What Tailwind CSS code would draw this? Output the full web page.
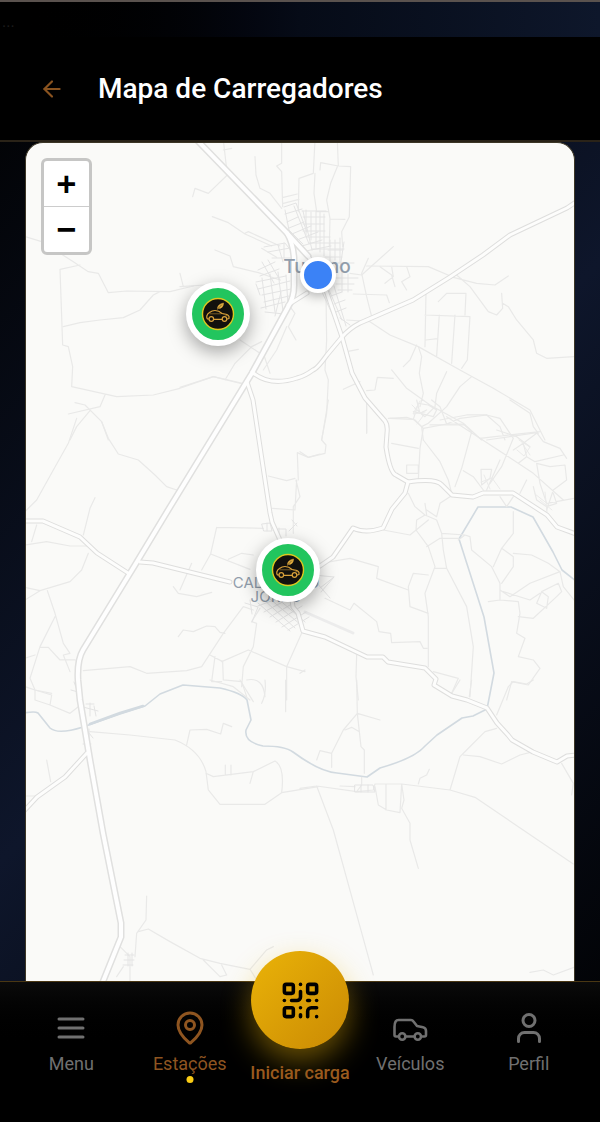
<!DOCTYPE html>
<html lang="pt-BR">
<head>
    <meta charset="UTF-8">
    <meta name="viewport" content="width=device-width, initial-scale=1.0">
    <title>Mapa de Carregadores</title>
    <script src="https://cdn.jsdelivr.net/npm/@tailwindcss/browser@4"></script>
</head>
<body class="min-h-screen flex flex-col bg-[linear-gradient(135deg,#000_0%,#0e162b_50%,#000_100%)] border-t-2 border-[#5a524e] font-[Roboto,sans-serif] text-white">
    <div class="h-[35px] shrink-0 px-[2px] pt-3 bg-linear-to-r from-black via-[#060b17] to-[#0e172b] text-base leading-4 text-[#1c1c1c]">...</div>

    <!-- Header -->
    <header class="h-[105px] shrink-0 flex items-center gap-[33px] px-[39px] bg-black border-b-2 border-[#2a2318]">
        <a href="#" aria-label="Voltar" class="text-[#8a531f]">
            <svg class="size-[26px]" viewBox="0 0 24 24" fill="none" stroke="currentColor" stroke-width="2" stroke-linecap="round" stroke-linejoin="round">
                <path d="m12 19-7-7 7-7" /><path d="M19 12H5" />
            </svg>
        </a>
        <h1 class="text-[28px] leading-8 font-medium">Mapa de Carregadores</h1>
    </header>

    <!-- Mapa -->
    <main class="flex-1 flex px-[25px]">
        <section aria-label="Mapa" class="relative flex-1 overflow-hidden rounded-t-[18px] border border-b-0 border-[#3c3626] bg-[#fafaf8]">
            <svg class="absolute inset-0 size-full" viewBox="26 143 548 838" preserveAspectRatio="xMidYMid slice" fill="none" stroke-linejoin="round" stroke-linecap="round">
                <defs>
                    <g id="highways">
                        <path d="M197 140L287 233L308 256" />
                        <path d="M287 233Q293 243 294 258V285Q294 298 288 307L252 373L170 507L135 565L83 650Q77 660 78 680L80 700L90 760L103 833L121 923V937L102 984" />
                    </g>
                    <g id="roads">
                        <path d="M308 256L317 270L327 293L342 337L352 373L365 398L385 421Q388 425 387 433L386 447Q390 473 396 475L408 482" />
                        <path d="M307 293L288 305" />
                        <path d="M576 202L567 208L510 235L483 255L450 277L413 300L360 323Q350 328 342 337L327 355Q317 369 313 370Q305 376 297 378Q270 387 252 372" />
                        <path d="M247 382L253 400L259 440L270 513L272 522L280 540L288 570L293 607L298 613L303 631L325 637L367 657H383L388 662L425 668L436 679L434 685L452 696L467 700L487 708L497 723L508 735L512 740L533 752L557 762L567 756L576 755" />
                        <path d="M24 521H43L80 537L97 553L128 573" />
                        <path d="M140 562L153 563L230 582" />
                        <path d="M320 566L333 557L353 528Q365 534 383 528L392 509L405 493L408 482Q436 478 442 485L452 495L473 497L483 493H513L547 515L557 527L576 534" />
                        <path d="M87 753L65 777L37 797L24 811" />
                    </g>
                </defs>

                <!-- Pista de pouso -->
                <path d="M305 612L353 633" stroke="#ececec" stroke-width="3" />

                <!-- Rios -->
                <g stroke="#d2dae0" stroke-width="1.6">
                    <path d="M24 713Q35 711 38 713L50 728Q58 735 83 727L120 714L145 706L160 694L183 685L220 688Q242 693 247 700L251 720L246 730Q244 742 263 746Q285 746 293 752Q320 772 337 773L367 777L380 768Q415 758 425 746L437 735L462 718L473 716L487 709L494 673L484 617L459 539L478 507H511L533 517L553 552L562 570L576 581" />
                    <path d="M90 724L120 713L143 706" stroke-width="2.5" />
                </g>

                <!-- Ruas e estradas de terra -->
                <g stroke="#e9e9e8" stroke-width="3.6">
                    <g transform="translate(180 140) scale(.3333)">
                        <path d="M130 0L142 105L85 160L45 145L38 170M130 30L155 25M225 50L228 105L240 145L270 160L305 205M305 0V70L290 78L305 95L308 200M355 215L357 115L400 100L405 0M405 100L402 160L410 215M420 90L422 68L475 78L472 0M475 78L512 80L508 230L485 275L488 320M472 80L452 130L440 180L450 235L448 320M450 237L495 238M410 215H445M310 172L352 162M357 178L310 190" />
                        <path d="M97 230L145 248L195 282L275 318M195 280L205 275L300 318M105 330L150 348L160 380L235 398M0 440L75 435M235 398L300 420M245 325L290 352M560 378L745 380L820 412L890 430L945 435L985 408M565 355L545 400L560 470L575 530M600 380L635 405L645 440M635 380L640 410L615 430M680 380L690 410L665 425L680 450M520 462L620 465L628 488M830 405L870 440L925 515L950 525L968 505L965 460M968 490L985 500L1010 540L1060 600L1070 640L1100 655L1185 650M738 460L735 620M735 525L870 530L862 660L845 685M825 525L815 670M778 525L770 648M775 485L800 460H858L855 525M738 600L772 596" />
                        <path d="M500 540L570 545L630 585L715 620L840 690L940 745L1050 810L1095 900M710 615L690 660L670 680M635 690L680 745L750 795L850 850L905 900M715 620L725 650L718 700L730 760L720 800M800 695L770 760L765 800M875 710L840 740L800 800L745 850L725 860M560 752L585 750L592 712L640 715M490 748L540 725M438 460L440 600L435 690L445 720L440 820L425 900M500 635L535 628M560 780V880M630 835L700 838L725 860L730 900M700 838L715 790L745 795L770 810L760 830L700 815M780 840L860 825L920 825L960 860L975 900M750 855H850M900 895L1080 875" />
                        <path d="M135 720L165 670L215 620L245 605M250 640L270 700M330 500L345 520L325 560L348 600M300 560L265 620M320 560L290 630L250 690M0 742L100 710L200 735M180 600L240 640M640 320L545 405L510 400" />
                    </g>
                    <g transform="translate(20 140) scale(.3333)">
                        <path d="M0 285L65 305L160 365L205 395L235 400L265 458L320 453L450 455L520 438M480 400L490 440M120 388L180 375M120 388L128 615L145 620L158 680L155 740L290 770L400 765L480 745L580 710L690 735M130 560L180 548L240 540L310 533L360 510L400 465L420 455M255 765L240 800L145 822M165 788L195 795L245 845L265 900M210 812L170 860L150 900" />
                    </g>
                    <g transform="translate(20 400) scale(.3333)">
                        <path d="M245 65L265 115L295 162L355 180L405 225L440 260L470 270M170 55L145 130L100 210L50 300L15 335M225 293L210 325L190 405M50 375L35 425M15 435L80 425L150 438H200M205 460L185 510L150 545L60 572L15 600M15 562L60 572M82 572L105 640L130 730L150 760L130 765L150 815M105 650L60 740L30 835L45 870L95 880M60 742H85L120 780H165M15 775L45 765" />
                        <path d="M190 812L330 800L380 820L500 812L545 800L610 700L670 620M475 710L490 690L520 695L560 678L585 680L600 697L615 700M460 560L475 580L530 590L575 577M515 490L480 570M590 382L572 462L545 510M590 382L730 385M572 462L690 508M625 478L665 460L700 465M745 228L800 242L825 235M830 240L825 330L758 325M828 240L840 290L820 320V400M835 240L832 158L865 172L900 162M670 620L700 630M720 625L695 665L710 670L700 740L670 800L665 860M605 785L685 750L800 800L855 815M800 900V800L845 700M570 765L608 785L610 840L665 845L680 890M585 770L575 845H605M680 840Q730 830 735 890" />
                    </g>
                    <g transform="translate(300 400) scale(.3333)">
                        <path d="M85 0L65 120L78 135L75 160L25 172L0 155M200 20V98M265 55L320 52L345 60L370 85L360 145L355 240M275 130L355 145M370 85L440 72H490L515 95L485 205L465 260M370 120L420 185L445 240L455 280M440 50L510 95L640 180L700 220L790 300M440 72L420 20L395 0M440 72L480 55L560 45L600 55L640 115M350 0L360 40L380 30M490 212L520 230L550 270M345 25L375 50L400 25M560 120L710 98L730 125L780 145L800 175M640 115L605 200L570 250M320 195H355V220H320ZM543 208H575L570 235L545 255ZM655 190L680 170L670 130L710 100M670 130L640 150M680 170L705 185L790 165M710 190L720 250L740 310L822 295M710 190L750 200L795 195L800 240L760 270L740 330M680 240L660 280M700 260L710 300L740 320L770 310L760 280M630 0L690 40L700 80L715 100" />
                        <path d="M325 280L345 320L375 345L410 360L425 400L430 450L440 505L500 620L520 740L510 890M375 345L350 360L348 390L385 440L405 500L375 580L385 650V800M380 330L410 350L420 310L450 290M375 310L380 345M425 400L495 405L510 410L515 450L575 500L600 550V600L565 605M495 405L475 420M380 440L420 415L475 415M440 505H405M385 525L340 520L325 560L330 620L385 640M60 490L150 475L235 500L230 535L325 570M250 390L330 405L385 360M600 600L655 605L660 640L650 700L675 715L655 770L700 780L720 805L685 855L635 845L620 900M600 570L630 590L690 550L780 515L790 560L822 600M640 460L695 465L745 490L780 515M605 445L580 500M605 445L640 470V500L605 550M640 335L640 400L605 445M655 650L700 655L770 590L785 575L775 550L725 575L710 610L740 625M725 575L745 590L740 625M610 575L690 600L720 580" />
                        <path d="M75 595L150 630L162 610L230 665L237 695L272 700L275 728L360 725L370 745H382M170 765L168 830L175 900M400 815L475 835L455 880M0 820L15 810M590 90L650 110L690 140M600 180L560 270M600 290L620 320L640 290" />
                    </g>
                    <g transform="translate(20 680) scale(.3333)">
                        <path d="M210 155L330 165L465 180Q540 210 558 275L565 330L600 373H735L785 338L895 320M500 195L510 150L560 148L602 162L610 130L635 140M558 280L580 290L700 275L765 243Q795 260 785 338M616 255V285M633 255V285M690 310L700 275M80 240L92 305M15 348H50M380 648L378 720L350 760L345 830M355 755L385 747L450 785L540 835L600 850L690 868L740 810L760 800M550 840L600 890L620 885L605 855M690 868L710 900M300 800L330 830V905M310 860L290 890M797 0V95M570 0L640 20L690 60M660 0L700 65M735 0Q740 40 725 70M15 20L45 30L95 45L90 75L150 100L175 80M45 30V60L90 75" />
                    </g>
                    <g transform="translate(300 680) scale(.3333)">
                        <path d="M170 0L172 100L183 200L193 210V280M172 100L130 150L95 220V262M95 220L60 212L50 240M172 100L240 120M135 150L155 142L178 155M0 325L50 318L170 335M50 318L100 450L180 740L220 885M120 318L165 320M185 292V315L170 335L220 330L225 312H305L450 330L525 352L820 552M225 320L235 375L260 390L300 398L305 312L312 360L305 385L330 430V480L355 565M258 312V390M355 312L360 295L380 285L388 268M450 330L480 230L500 210L555 155L590 145M490 225L540 230L605 252L660 225L700 215M785 250L820 310L815 345M690 877L730 870L760 885L822 862M480 0L455 40M515 0L508 50M590 105L625 20L640 5L680 12L700 0" />
                    </g>
                </g>

                <!-- Malha urbana -->
                <g stroke="#e4e4e4" stroke-width="1">
                    <path d="M284 207L296 203L307 232M285 214L302 209M287 222L298 217M289 228L304 222M292 234L311 226M297 240L318 232M302 246L322 240M306 251L331 246M285 210L289 230L303 244M294 206L309 244M303 211L312 250" />
                    <path d="M302 211H326M303 217H325M303 224H324M303 231H325M306 237H330M309 243H340M312 249H344M306 210V235M311 212V240M316 211V248M320 212V252M324 214V256M330 240V262M335 240V260M340 238V262M344 242L340 268M328 250H343M325 257H342M326 263H354" />
                    <path d="M264 247L285 243L292 252M268 252L290 248M272 258H292M284 243V258M278 245L283 262M262 262L274 283M268 260L280 280M258 270L275 262M260 276L279 269M256 282L286 276M258 289L290 281M262 295L291 289M264 302L289 296M261 308L285 302M262 278L266 309M270 274L275 312M278 272L283 311M286 275L288 304M256 284L260 295M265 312L284 314M275 316L281 292" />
                    <path d="M322 292L334 318M329 290L342 320M334 286L346 326M331 296L342 292M334 304L345 300M336 312L346 308M334 278H358M336 284H354M338 290H352M342 272V292M348 274V292M340 318L350 325" />
                    <path d="M258 603L290 631M264 600L295 628M270 599L301 625M276 597L305 622M258 606L282 597M264 612L288 599M270 617L295 602M276 622L302 606M282 627L306 612M288 630L309 617M245 603L258 607L252 622M250 600L252 614M314 575L334 577L320 588M316 582L330 598M321 592L334 577" />
                    <path d="M262 524L270 523L272 531H264ZM267 523V531M276 529H286V536M279 528V538M292 520L297 526M289 531L297 523" />
                    <path d="M86 704H94M90 703V716M94 706L96 716M83 707L98 711M85 728L93 738M89 729V740M83 744H91M74 682L80 698M71 690L78 692" />
                    <path d="M125 955H134M124 960H134M123 965H133M128 953V966M132 953V966" />
                    <path d="M355 785H373L375 792H355ZM361 785V792M368 785V792" />
                </g>
                <g stroke="#ebebea" stroke-width="1">
                    <path d="M412 405L423 416L417 424M420 401L413 414L425 412M519 440L530 447L524 456L517 450M522 443L530 455M481 482L492 478L500 489M484 475L490 489M540 500L552 510M535 494L549 505M545 492L547 512" />
                </g>

                <!-- Rodovias -->
                <use href="#roads" stroke="#dededd" stroke-width="5" />
                <use href="#highways" stroke="#e0e0df" stroke-width="7" />
                <use href="#roads" stroke="#fdfdfc" stroke-width="3" />
                <use href="#highways" stroke="#fefefe" stroke-width="4" />

                <g class="font-[Inter,sans-serif]" fill="#929eac" text-anchor="middle">
                    <text x="317" y="273" font-size="19" font-weight="500">Tucano</text>
                    <text font-size="15"><tspan x="276" y="588">CALDAS DO</tspan><tspan x="276" y="602">JORRO</tspan></text>
                </g>
            </svg>

            <!-- Zoom -->
            <div class="absolute top-[15px] left-[15px] flex flex-col rounded-md border-3 border-[#c6c6c5] bg-white font-['DejaVu_Sans_Mono',monospace] text-[32px] leading-[42px] font-bold text-black">
                <button type="button" aria-label="Aumentar zoom" class="w-[45px] h-[46px] pb-[2px] border-b border-[#cccccc]">+</button>
                <button type="button" aria-label="Diminuir zoom" class="w-[45px] h-[45px] pb-[2px]">−</button>
            </div>

            <!-- Localização atual -->
            <div class="absolute left-[53.2%] top-[15.8%] size-9 -translate-1/2 rounded-full border-[4px] border-white bg-[#3b82f6] shadow-[0_3px_12px_rgba(0,0,0,0.3)]"></div>

            <!-- Carregadores -->
            <button type="button" aria-label="Carregador Tucano" class="absolute left-[35%] top-[20.4%] size-16 -translate-1/2 flex items-center justify-center rounded-full border-6 border-white bg-[#22c55e] shadow-[0_6px_18px_rgba(0,0,0,0.35)]">
                <svg class="size-[34px]" viewBox="0 0 34 34" fill="none" stroke-linecap="round" stroke-linejoin="round">
                    <circle cx="17" cy="17" r="15.5" fill="#12110d" stroke="#dcc820" stroke-width="1.4" />
                    <g id="ev-car" stroke="#d9a13a" stroke-width="1.2">
                        <path d="M8 22H6.500Q5.500 21 5.800 19Q6.500 16.500 8.500 15.500Q11 13.500 14 13.500Q18 13.500 21 16.500Q27 17 28 19.500V21.500L26.500 22M12.800 22.300H21" />
                        <path d="M9 16.800H20M21 16.500L26 18.800" stroke-width=".5" />
                        <circle cx="10.300" cy="22" r="2.300" />
                        <circle cx="23.500" cy="22" r="2.300" />
                        <path d="M16.500 12Q16 7.500 22.500 6Q22.500 11.500 17.500 11.500Z" fill="#e6b240" stroke-width=".6" />
                        <path d="M16.500 12L20.500 8" stroke="#12110d" stroke-width=".5" />
                    </g>
                </svg>
            </button>
            <button type="button" aria-label="Carregador Caldas do Jorro" class="absolute left-[47.8%] top-[51%] size-16 -translate-1/2 flex items-center justify-center rounded-full border-6 border-white bg-[#22c55e] shadow-[0_6px_18px_rgba(0,0,0,0.35)]">
                <svg class="size-[34px]" viewBox="0 0 34 34" fill="none" stroke-linecap="round" stroke-linejoin="round">
                    <circle cx="17" cy="17" r="15.5" fill="#12110d" stroke="#dcc820" stroke-width="1.4" />
                    <use href="#ev-car" />
                </svg>
            </button>
        </section>
    </main>

    <!-- Menu inferior -->
    <nav class="relative h-[141px] shrink-0 flex items-start px-3 pt-7 border-t border-[#4a3713] bg-linear-to-b from-[#0b0b0b] to-black to-50% text-lg leading-6 text-[#707070]">
        <a href="#" class="flex-1 flex flex-col items-center gap-[6px]">
            <svg class="size-9" viewBox="0 0 24 24" fill="none" stroke="currentColor" stroke-width="2" stroke-linecap="round" stroke-linejoin="round">
                <path d="M4 6h16M4 12h16M4 18h16" />
            </svg>
            Menu
        </a>
        <a href="#" class="relative flex-1 flex flex-col items-center gap-[6px] text-[#8f5520]">
            <svg class="size-9" viewBox="0 0 24 24" fill="none" stroke="currentColor" stroke-width="2" stroke-linecap="round" stroke-linejoin="round">
                <path d="M20 10c0 4.993-5.539 10.193-7.399 11.799a1 1 0 0 1-1.202 0C9.539 20.193 4 14.993 4 10a8 8 0 0 1 16 0" />
                <circle cx="12" cy="10" r="3" />
            </svg>
            Estações
            <span class="absolute top-full left-1/2 size-[7px] -translate-x-1/2 rounded-full bg-[#facc15]"></span>
        </a>
        <div class="w-[102px] -mt-[59px] flex flex-col items-center gap-3 text-[#9a5a1e]">
            <button type="button" aria-labelledby="start-label" class="size-[98px] flex items-center justify-center rounded-full bg-linear-to-br from-[#eab308] to-[#ca8a04] text-black shadow-[0_12px_30px_rgba(234,179,8,0.45)]">
                <svg class="size-[43px]" viewBox="0 0 24 24" fill="none" stroke="currentColor" stroke-width="2" stroke-linecap="round" stroke-linejoin="round">
                    <rect width="5" height="5" x="3" y="3" rx="1" />
                    <rect width="5" height="5" x="16" y="3" rx="1" />
                    <rect width="5" height="5" x="3" y="16" rx="1" />
                    <path d="M21 16h-3a2 2 0 0 0-2 2v3" />
                    <path d="M21 21v.01" />
                    <path d="M12 7v3a2 2 0 0 1-2 2H7" />
                    <path d="M3 12h.01" />
                    <path d="M12 3h.01" />
                    <path d="M12 16v.01" />
                    <path d="M16 12h1" />
                    <path d="M21 12v.01" />
                    <path d="M12 21v-1" />
                </svg>
            </button>
            <span id="start-label" class="font-medium whitespace-nowrap">Iniciar carga</span>
        </div>
        <a href="#" class="flex-1 flex flex-col items-center gap-[6px]">
            <svg class="size-9" viewBox="0 0 36 36" fill="none" stroke="currentColor" stroke-width="2.6" stroke-linecap="round" stroke-linejoin="round">
                <path d="M6.500 26.500H4Q2.500 26.500 2.500 25V17Q2.500 10 6.500 10H19Q20.500 10 21.500 11.500L25 16L31 17.300Q34 18 34 21V25Q34 26.500 32.500 26.500H29.500M13.700 26.500H22.300" />
                <circle cx="10.200" cy="26.500" r="3.200" />
                <circle cx="25.800" cy="26.500" r="3.200" />
            </svg>
            Veículos
        </a>
        <a href="#" class="flex-1 flex flex-col items-center gap-[6px]">
            <svg class="size-9" viewBox="0 0 24 24" fill="none" stroke="currentColor" stroke-width="2" stroke-linecap="round" stroke-linejoin="round">
                <path d="M19 21v-2a4 4 0 0 0-4-4H9a4 4 0 0 0-4 4v2" />
                <circle cx="12" cy="7" r="4" />
            </svg>
            Perfil
        </a>
    </nav>
</body>
</html>
